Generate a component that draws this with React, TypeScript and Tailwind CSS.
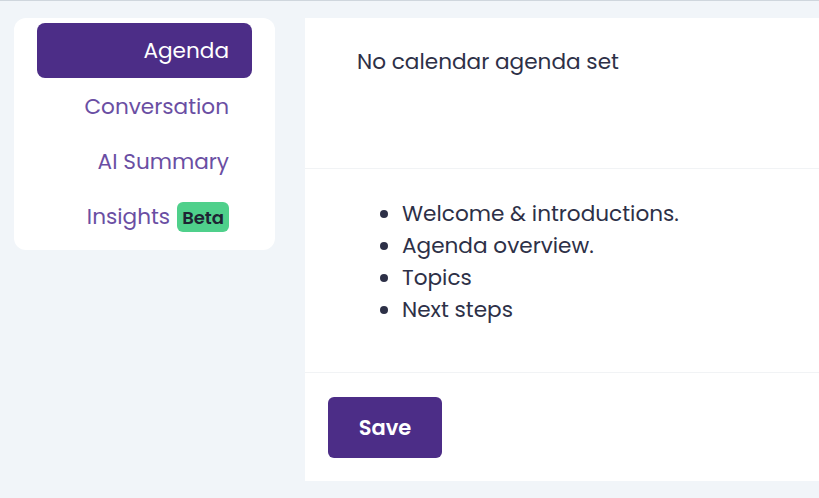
import { useState } from "react";

const TABS = ["Agenda", "Conversation", "AI Summary", "Insights"];

const AGENDA_ITEMS = [
  "Welcome & introductions.",
  "Agenda overview.",
  "Topics",
  "Next steps",
];

export default function App() {
  const [active, setActive] = useState("Agenda");

  return (
    <div
      className="min-h-screen bg-[#f1f5f9] border-t border-[#cfd6dd] flex items-start gap-[30px] pt-[17px] pl-[14px] text-[#2d3047]"
      style={{ fontFamily: "Poppins, Inter, 'Noto Sans', sans-serif" }}
    >
      {/* Left nav */}
      <aside className="w-[261px] h-[232px] shrink-0 bg-white rounded-xl px-[23px] pt-[5px] flex flex-col">
        {TABS.map((tab) => {
          const isActive = tab === active;
          return (
            <button
              key={tab}
              onClick={() => setActive(tab)}
              className={
                isActive
                  ? "h-[55px] rounded-lg bg-[#4c2d87] text-white text-[21.6px] flex items-center justify-end pr-[23px] pt-[2px]"
                  : "h-[55px] rounded-lg text-[#6a4ea3] text-[21.6px] flex items-center justify-end pr-[23px] pt-[3px]"
              }
            >
              {tab}
              {tab === "Insights" && (
                <span className="ml-[7px] h-[30px] px-[5px] rounded-md bg-[#4fd08b] text-[#1e2433] text-[18px] font-semibold flex items-center">
                  Beta
                </span>
              )}
            </button>
          );
        })}
      </aside>

      {/* Main panel */}
      <main className="flex-1 h-[463px] bg-white flex flex-col">
        <section className="h-[151px] border-b border-[#f1f3f5] pl-[52px] pt-[28px]">
          <p className="text-[21.6px] leading-[32px]">No calendar agenda set</p>
        </section>

        <section className="h-[204px] border-b border-[#f1f3f5] pl-[97px] pt-[29px]">
          <ul className="list-disc text-[21.6px] leading-[32px]">
            {AGENDA_ITEMS.map((item) => (
              <li key={item}>{item}</li>
            ))}
          </ul>
        </section>

        <div className="pl-[23px] pt-[24px]">
          <button className="w-[114px] h-[61px] rounded-md bg-[#4c2d87] text-white text-[21px] font-semibold">
            Save
          </button>
        </div>
      </main>
    </div>
  );
}
